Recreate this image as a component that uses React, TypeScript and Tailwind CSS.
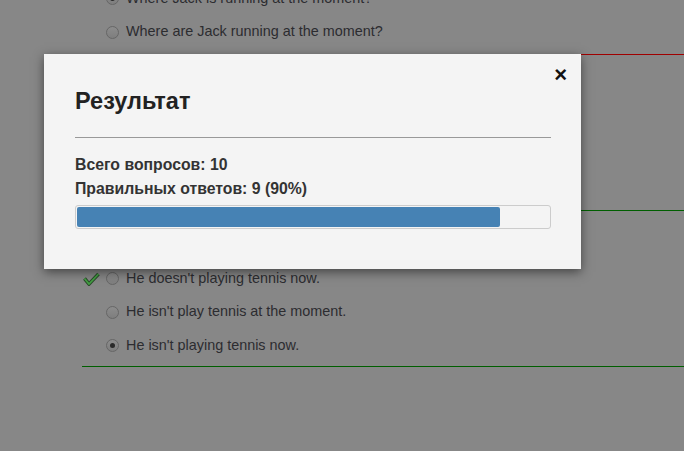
import React from "react";

const Radio = ({ checked = false }: { checked?: boolean }) => (
  <span className="flex h-[13px] w-[13px] shrink-0 items-center justify-center rounded-full border border-[#666] bg-[linear-gradient(#8c8c8c,#7e7e7e)]">
    {checked && <span className="h-[5px] w-[5px] rounded-full bg-[#2a2a2a]" />}
  </span>
);

const Check = () => (
  <svg width="17" height="14" viewBox="0 0 17 14" className="ml-[1px]">
    <path d="M1.5 6.5 L6 12 L15.5 2" fill="none" stroke="#2b4a2b" strokeWidth="3.6" strokeLinejoin="miter" />
    <path d="M1.5 6.5 L6 12 L15.5 2" fill="none" stroke="#43a043" strokeWidth="1.8" strokeLinejoin="miter" />
  </svg>
);

const Row = ({ text, checked, mark }: { text: string; checked?: boolean; mark?: boolean }) => (
  <div className="flex h-[33.5px] items-center">
    <div className="flex w-[24px] items-center">{mark && <Check />}</div>
    <Radio checked={checked} />
    <span className="ml-[7px] text-[14.4px] text-[#2c2c30]">{text}</span>
  </div>
);

export default function App() {
  return (
    <div
      className="relative h-[451px] w-[684px] overflow-hidden bg-[#878787]"
      style={{ fontFamily: '"Liberation Sans", Arial, sans-serif' }}
    >
      <div className="mt-[-18px] flex flex-col pl-[82px]">
        <Row text="Where Jack is running at the moment?" checked />
        <Row text="Where are Jack running at the moment?" />
        <div className="mt-[5px] h-px bg-[#a00000]" />
        <div className="h-[155px]" />
        <div className="h-px bg-[#005f00]" />
        <div className="h-[51px]" />
        <Row text="He doesn't playing tennis now." mark />
        <Row text="He isn't play tennis at the moment." />
        <Row text="He isn't playing tennis now." checked />
        <div className="mt-[3px] h-px bg-[#005f00]" />
      </div>

      <div className="absolute left-[44px] top-[54px] h-[215px] w-[537px] bg-[#f4f4f4] pl-[31px] pr-[30px] pt-[34px] shadow-[0_3px_10px_rgba(0,0,0,0.5)]">
        <button className="absolute right-[14px] top-[10px] text-[22px] font-bold leading-none text-[#111]">×</button>
        <h2 className="text-[23.5px] font-bold leading-[26px] text-[#222]">Результат</h2>
        <div className="mt-[23px] h-px bg-[#999]" />
        <div className="mt-[15px] text-[15.8px] font-bold leading-[24px] text-[#333]">
          <div>Всего вопросов: 10</div>
          <div>Правильных ответов: 9 (90%)</div>
        </div>
        <div className="mt-[4px] h-[24px] rounded-[3px] border border-[#ccc] p-px">
          <div className="h-full rounded-[2px] bg-[#4682b4]" style={{ width: "89.6%" }} />
        </div>
      </div>
    </div>
  );
}
